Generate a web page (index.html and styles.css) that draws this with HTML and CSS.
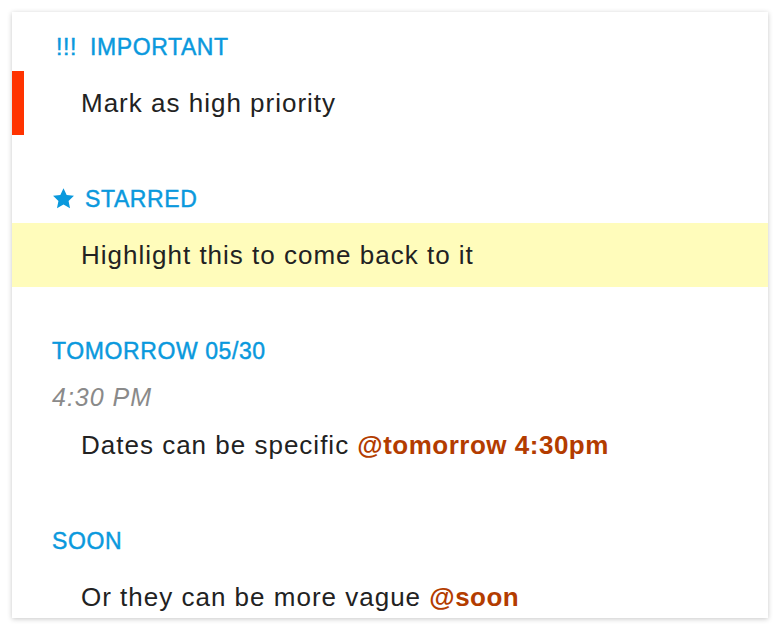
FILE: index.html
```html
<!DOCTYPE html>
<html>
<head>
<meta charset="utf-8">
<link rel="stylesheet" href="styles.css">
</head>
<body>
<div class="card">
  <div class="section first">
    <div class="head"><span class="bang">!!!</span><span>IMPORTANT</span></div>
    <div class="row important">Mark as high priority</div>
  </div>
  <div class="section">
    <div class="head"><svg class="star" viewBox="0 0 24 24" width="23" height="23"><path d="M12 1.2l3.3 7.1 7.6.9-5.6 5.3 1.5 7.6L12 18.3l-6.8 3.8 1.5-7.6L1.1 9.2l7.6-.9z" fill="#0a99dd"/></svg><span>STARRED</span></div>
    <div class="row starred">Highlight this to come back to it</div>
  </div>
  <div class="section">
    <div class="head">TOMORROW 05/30</div>
    <div class="time">4:30 PM</div>
    <div class="row">Dates can be specific <span class="tag">@tomorrow 4:30pm</span></div>
  </div>
  <div class="section">
    <div class="head">SOON</div>
    <div class="row">Or they can be more vague <span class="tag">@soon</span></div>
  </div>
</div>
</body>
</html>
```
FILE: styles.css
```css
html, body {
  margin: 0;
  padding: 0;
  background: #fff;
}
body {
  font-family: "Liberation Sans", Arial, sans-serif;
}
.card {
  margin: 12px;
  width: 756px;
  height: 606px;
  overflow: hidden;
  background: #fff;
  box-shadow: 0 1px 5px rgba(0, 0, 0, 0.22);
}
.section {
  margin-top: 40px;
}
.section.first {
  margin-top: 11px;
}
.head {
  height: 48px;
  display: flex;
  align-items: center;
  padding-left: 40px;
  font-size: 23px;
  color: #0a99dd;
  letter-spacing: 0.6px;
  -webkit-text-stroke: 0.45px #0a99dd;
}
.bang {
  padding-left: 4px;
  margin-right: 13px;
}
.star {
  margin-right: 10px;
  margin-top: -2px;
}
.time {
  height: 38px;
  display: flex;
  align-items: center;
  padding-top: 6px;
  box-sizing: border-box;
  padding-left: 40px;
  font-size: 25px;
  font-style: italic;
  color: #8a8a8a;
  letter-spacing: 1px;
}
.row {
  height: 64px;
  display: flex;
  align-items: center;
  padding-left: 69px;
  font-size: 26px;
  color: #222;
  white-space: pre;
  letter-spacing: 1px;
}
.row.important {
  box-shadow: inset 12px 0 0 #ff3300;
}
.row.starred {
  background: #fffcbb;
}
.tag {
  color: #b33c00;
  font-weight: bold;
  letter-spacing: 0.5px;
}
```
